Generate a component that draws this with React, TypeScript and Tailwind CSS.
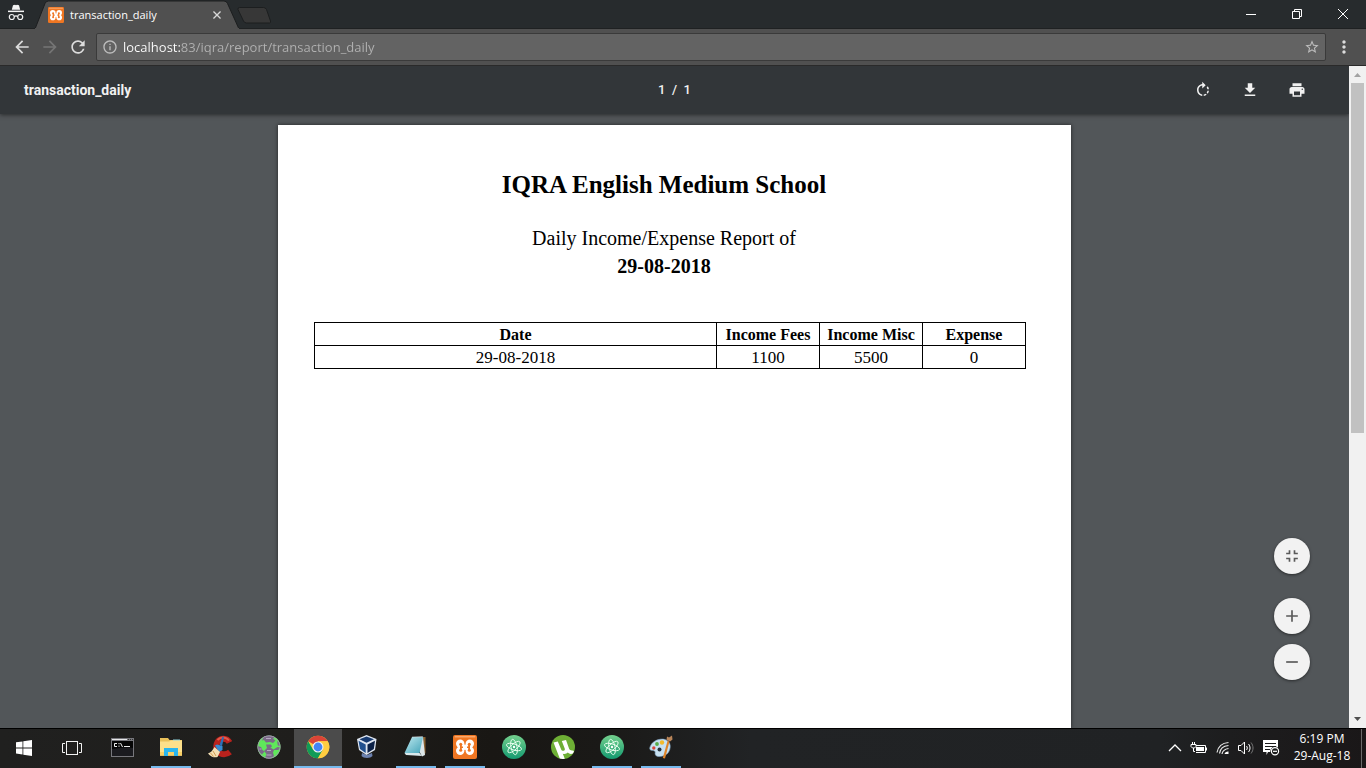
import type { ReactNode } from "react";
import {
  MdAdd,
  MdArrowBack,
  MdArrowForward,
  MdFileDownload,
  MdFullscreenExit,
  MdInfoOutline,
  MdMoreVert,
  MdPrint,
  MdRefresh,
  MdRemove,
  MdRotateRight,
  MdStarBorder,
} from "react-icons/md";

function IncognitoIcon() {
  return (
    <svg viewBox="0 0 18 18" className="size-[18px]" fill="#f4f4f4" aria-hidden="true">
      <path d="M6 1.2 8 .8l1 .4 1-.4 2 .4 1.2 4.6H4.8z" />
      <rect x="1" y="6.6" width="16" height="1.5" />
      <g fill="none" stroke="#f4f4f4" strokeWidth="1.2">
        <circle cx="4.8" cy="13" r="2.5" />
        <circle cx="13.2" cy="13" r="2.5" />
        <path d="M7.3 12.6c1-.8 2.4-.8 3.4 0" />
      </g>
    </svg>
  );
}

function XamppIcon({ className }: { className: string }) {
  return (
    <svg viewBox="0 0 24 24" className={className} aria-hidden="true">
      <rect width="24" height="24" rx="2" fill="#ef7622" />
      <rect x="1.5" y="1" width="21" height="1.5" rx=".7" fill="#f9a86b" />
      <g fill="#fff">
        <circle cx="7.200" cy="8.700" r="4.200" />
        <circle cx="16.800" cy="8.700" r="4.200" />
        <circle cx="7.200" cy="15.700" r="4.200" />
        <circle cx="16.800" cy="15.700" r="4.200" />
        <rect x="5" y="9.500" width="14" height="5.400" />
      </g>
      <g fill="#ef7622">
        <circle cx="7.700" cy="9.200" r="1.500" />
        <circle cx="16.300" cy="9.200" r="1.500" />
        <circle cx="7.700" cy="15.200" r="1.500" />
        <circle cx="16.300" cy="15.200" r="1.500" />
        <path d="M7 9.500h1.800v5.500H7zM15.200 9.500H17v5.500h-1.800zM8 11.400h2v1.600H8zM14 11.400h2v1.600h-2z" />
      </g>
    </svg>
  );
}

function WindowsIcon() {
  return (
    <svg viewBox="0 0 16 16" className="size-4" fill="#fff" aria-hidden="true">
      <path d="M0 2.3 6.5 1.4V7.5H0zM7.3 1.3 16 0v7.5H7.3zM0 8.400h6.5v6.1L0 13.6zM7.3 8.400H16V16l-8.700-1.3z" />
    </svg>
  );
}

function TaskViewIcon() {
  return (
    <svg viewBox="0 0 20 16" className="h-4 w-5" fill="none" stroke="#f2f2f2" aria-hidden="true">
      <rect x="4.5" y="1.5" width="11" height="13" />
      <path d="M3 3.5H.5v9H3M17 3.5h2.5v9H17" />
    </svg>
  );
}

function CommandPromptIcon() {
  return (
    <svg viewBox="0 0 23 19" className="h-[19px] w-[23px]" aria-hidden="true">
      <rect width="23" height="19" fill="#77777c" />
      <rect x="1" y="1" width="15" height="1" fill="#e6e6e8" />
      <path d="M17 1h1v1h-1zM19 1h1v1h-1zM21 1h1v1h-1z" fill="#333" />
      <rect x="1" y="3" width="21" height="15" fill="#050505" />
      <path d="M1 11c8-1 14-2 21-1v8H1z" fill="#1b1b1f" />
      <path d="M6 5.5H3.500v3H6M8 5v1.200M8 7.600v1.200M9.500 5l2 4M13 8.500h6" stroke="#eee" fill="none" />
    </svg>
  );
}

function ExplorerIcon() {
  return (
    <svg viewBox="0 0 22 18" className="h-[18px] w-[22px]" aria-hidden="true">
      <path d="M0 0h8l1.5 2H22v15.500H0z" fill="#eac15a" />
      <path d="M13 1.500h7v2h-7z" fill="#8fd3dc" />
      <path d="M0 3.500h9L11 2.500h11v15H0z" fill="#fde08a" />
      <path d="M0 14h22v3.500H0z" fill="#f7cf66" />
      <path d="M4 10h14v8h-4v-4H8v4H4z" fill="#29b5ee" />
    </svg>
  );
}

function CleanerIcon() {
  return (
    <svg viewBox="0 0 24 24" className="size-6" aria-hidden="true">
      <path
        d="M21.500 7.500C19 2.500 12.500 2.500 9.500 7c-2.500 4-1 9.500 3 11.500 3.500 1.500 7 .5 9.500-1.500"
        fill="none"
        stroke="#b8221d"
        strokeWidth="6"
      />
      <path
        d="M21 5.500C18 1.500 12.500 1.500 9.500 5"
        fill="none"
        stroke="#e2594a"
        strokeWidth="2"
      />
      <path d="M14.500 1.500 16 2.500l-2 8.500-2.500-1z" fill="#2b6fb8" />
      <path d="m7 10.500 2-1 5.500 1.500v4L11 17z" fill="#338bd4" />
      <path d="m6.500 12 5.500 5-2.500 5c-3 1-6.500 0-9.500-3.500 3-1 4.500-3 6.500-6.500z" fill="#f4dfb4" />
      <path d="m2.500 18 3 3.500M5 16l3 5" stroke="#d09b54" fill="none" />
    </svg>
  );
}

function GlobeIcon() {
  return (
    <svg viewBox="0 0 24 24" className="size-6" aria-hidden="true">
      <circle cx="12" cy="12" r="11.5" fill="#5fe85a" />
      <g fill="#7b6a88">
        <path d="M7 1.500C11-.2 15 .2 18 2l-2 1.500 2.500 2L16 8l-3-1-4 .5L7 5l-2 .5z" />
        <path d="M.6 11 4 12l1.500 3 2 1.500-2.500 3C2 17.500.6 14.500.6 11z" />
        <path d="M9 9.500h5l1 2-1.500 1 3 2 4-2.500 2.800.5-2 2.500H17l-1 2.500 1 3.500-4 3.500-5-1.500 1.500-4L7 16l3-3z" />
        <path d="M20 6l2.500 2 .8 3-2.500-.5z" />
      </g>
      <path d="M9 3.500h5M10 15.500h4M9.500 20h5M2.500 14h2" stroke="#b4a6c0" strokeWidth="1.200" />
      <circle cx="12" cy="12" r="11.2" fill="none" stroke="#a59ab0" strokeWidth=".8" />
    </svg>
  );
}

function ChromeIcon() {
  return (
    <svg viewBox="0 0 24 24" className="size-6" aria-hidden="true">
      <circle cx="12" cy="12" r="11.3" fill="#ffcd40" />
      <path d="M12 12 2.210 6.350A11.3 11.3 0 0 1 21.790 6.350H12z" fill="#db4437" />
      <path d="M2.210 6.350A11.3 11.3 0 0 0 12 23.300l4.900-8.500L12 12 7.100 14.830z" fill="#109b58" />
      <path d="M12 6.350h9.790A11.3 11.3 0 0 1 12 23.300l4.900-8.470z" fill="#ffcd40" />
      <circle cx="12" cy="12" r="5.500" fill="#f1f1f1" />
      <circle cx="12" cy="12" r="4.400" fill="#4285f4" />
    </svg>
  );
}

function VirtualBoxIcon() {
  return (
    <svg viewBox="0 0 24 24" className="size-6" aria-hidden="true">
      <path d="m7 18 5 2 5-2 .5 3c-2 2.500-9 2.500-11 0z" fill="#6c82b0" />
      <path d="M11.500 0 21.500 4 20 15l-8.500 5L4 15 2 4z" fill="#dfe6f1" />
      <path d="M11.500 1.500 19 4.300l-7.500 3.500L4.500 4.300z" fill="#173a70" />
      <path d="m3.500 5.700 7.200 3.700v8.600L5 14z" fill="#21508f" />
      <path d="M20 5.700 12.500 9.400V18l6.300-4z" fill="#0c2147" />
    </svg>
  );
}

function NotepadIcon() {
  return (
    <svg viewBox="0 0 24 24" className="size-6" aria-hidden="true">
      <defs>
        <linearGradient id="notepad" x1="0" y1="0" x2="1" y2="1">
          <stop offset="0" stopColor="#bfeaf0" />
          <stop offset="1" stopColor="#43a3b8" />
        </linearGradient>
      </defs>
      <path d="M19 2h2.500v16l-1.500 2z" fill="#8a612f" />
      <path d="m8 2 11-.5 2 18.500-3 1.500z" fill="#dbe6e9" />
      <path d="M8 2h11l-3.500 16H.5z" fill="url(#notepad)" />
      <path d="M.5 18h15l2.500 3L2 20z" fill="#d9e8eb" />
      <path d="M8.500 2h10" stroke="#d9d9d9" strokeDasharray="1 1" />
    </svg>
  );
}

function AtomIcon() {
  return (
    <svg viewBox="0 0 24 24" className="size-6" aria-hidden="true">
      <defs>
        <linearGradient id="atom" x1="0" y1="0" x2="0" y2="1">
          <stop offset="0" stopColor="#74d08d" />
          <stop offset="1" stopColor="#149a70" />
        </linearGradient>
      </defs>
      <circle cx="12" cy="12" r="12" fill="url(#atom)" />
      <g fill="none" stroke="#eafff0" strokeWidth=".9">
        <ellipse cx="12" cy="12" rx="3" ry="7.8" transform="rotate(-12 12 12)" />
        <ellipse cx="12" cy="12" rx="3" ry="7.8" transform="rotate(48 12 12)" />
        <ellipse cx="12" cy="12" rx="3" ry="7.8" transform="rotate(108 12 12)" />
      </g>
      <circle cx="12" cy="12" r="1.2" fill="#fff" />
    </svg>
  );
}

function TorrentIcon() {
  return (
    <svg viewBox="0 0 24 24" className="size-6" aria-hidden="true">
      <circle cx="12" cy="12" r="12" fill="#6eaf35" />
      <path
        d="m2.500 7.500 4.300-1 3.500 8.300c.8 1.800 4 1.200 3.500-1L10.800 6l4.200-.9 3.200 9c.4 1 1.500 1.500 3 1.400l1.800.5-1 2.400c-1.800.9-4 .5-5.200-.8-1.200 1.300-3 1.800-5 1.200l2 4.900c-1.500.4-3.500.4-5-.2z"
        fill="#fff"
      />
    </svg>
  );
}

function PaintIcon() {
  return (
    <svg viewBox="0 0 24 24" className="size-6" aria-hidden="true">
      <path
        d="M1.500 11C3.500 6 10.500 3 16 4.500 22.500 6.500 22.500 14 18.500 18.500 14.500 22 8 22.500 6.500 20c-1-2 .5-3-1-4-1.500-1-3.500 0-4.500-1.500-.5-1-.2-2.300.5-3.500z"
        fill="#c7e1f2"
        stroke="#7fa5c4"
        strokeWidth=".6"
      />
      <circle cx="4.800" cy="13" r="1.700" fill="#d8453c" />
      <circle cx="8" cy="9" r="1.900" fill="#58ad4b" />
      <circle cx="13" cy="7.500" r="2.200" fill="#f3ba2b" />
      <circle cx="10.500" cy="14.500" r="2" fill="#25303a" />
      <path d="m18.500 6 2 .6-4.500 17-2.200-.5z" fill="#df8429" />
      <path d="M17.500 5 18 1.500l2 1L23 .5l.5 4-2.500 2z" fill="#b98559" />
    </svg>
  );
}

function BatteryIcon() {
  return (
    <svg viewBox="0 0 18 14" className="h-3.5 w-[18px]" fill="none" stroke="#fff" aria-hidden="true">
      <path d="M6 4.500h9.500v7h-9.500M16.500 6.500v3" />
      <rect x="6" y="6" width="8" height="4" fill="#fff" stroke="none" />
      <path d="M2.500 1v2M4.500 1v2M1 3.500h5v2l-1.500 1.500h-2L1 5.500zM3.500 7v3.500H5" />
    </svg>
  );
}

function WifiIcon() {
  return (
    <svg viewBox="0 0 14 14" className="size-3.5" fill="none" stroke="#e8e8e8" aria-hidden="true">
      <path
        d="M1 11.500C2 6 6 2 12.500 1.500M3.500 12.500C4 8 7.500 5 12.500 4.500M6 13c.5-3 3-5 6.500-5.500"
        strokeWidth="1.200"
      />
      <path d="M8.500 13c.3-1.500 2-2.700 4-2.500V13z" fill="#fff" stroke="none" />
    </svg>
  );
}

function VolumeIcon() {
  return (
    <svg viewBox="0 0 17 14" className="h-3.5 w-[17px]" fill="none" stroke="#fff" aria-hidden="true">
      <path d="M.5 4.500H3L6.500 1v12L3 9.500H.5z" />
      <path d="M8.500 5c1 1.200 1 2.800 0 4M10.500 3c2 2.500 2 5.500 0 8" />
      <path d="M13 1.500c2.700 3.500 2.700 7.500 0 11" stroke="#777" />
    </svg>
  );
}

function ActionCenterIcon() {
  return (
    <svg viewBox="0 0 17 16" className="h-4 w-[17px]" aria-hidden="true">
      <path d="M0 0h15v12H5l-1.500 3V12H0z" fill="#fff" />
      <path d="M2 3.500h11M2 6.500h11M2 9.500h5" stroke="#1b1b1b" />
      <circle cx="12" cy="11.300" r="4.700" fill="#1b1b1b" />
      <circle cx="12" cy="11.300" r="3.600" fill="#1b1b1b" stroke="#fff" strokeWidth="1.200" />
      <path d="M10 11.300h4" stroke="#fff" strokeWidth="1.200" />
    </svg>
  );
}

function TitleBar() {
  return (
    <header className="flex h-[29px] shrink-0 border-b border-[#1f2122] bg-[#272b2d]">
      <div className="flex w-[35px] justify-center pt-1 pr-1">
        <IncognitoIcon />
      </div>
      <div className="relative flex h-7 w-[204px] items-center pt-px pr-3 pl-[13px]">
        <svg
          viewBox="0 0 204 29"
          preserveAspectRatio="none"
          className="absolute inset-x-0 top-0 h-[29px] w-full"
          aria-hidden="true"
        >
          <path d="M0 29 10 3.500Q11 1 13.500 1H189q2.500 0 3.500 2.500L204 29z" fill="#505050" stroke="#1c1e1f" />
          <path d="M0 28.500h204" stroke="#505050" />
        </svg>
        <div className="relative flex flex-1 items-center">
          <XamppIcon className="size-4" />
          <span className="ml-1.5 flex-1 text-[11px] leading-4 text-white">transaction_daily</span>
          <button type="button" aria-label="Close tab" className="mr-1 flex size-3 items-center justify-center">
            <svg viewBox="0 0 9 9" className="size-2" stroke="#d8d8d8" strokeWidth="1.500" aria-hidden="true">
              <path d="m.5.5 8 8M8.500.5l-8 8" />
            </svg>
          </button>
        </div>
      </div>
      <button type="button" aria-label="New tab" className="mt-[7px] -ml-0.5 h-[17px]">
        <svg viewBox="0 0 35 17" className="h-[17px] w-[35px]" aria-hidden="true">
          <path
            d="M2.500.5h24q2 0 3 2l4 11.500q.5 2-1 2H9.500q-2 0-3-2L1 2.500Q.5.5 2.500.5z"
            fill="#373737"
            stroke="#1c1e1f"
          />
        </svg>
      </button>
      <div className="ml-auto flex h-[27px]">
        <button type="button" aria-label="Minimize" className="flex w-[46px] items-center justify-center">
          <svg viewBox="0 0 10 10" className="size-2.5" stroke="#fff" aria-hidden="true">
            <path d="M0 5.500h10" />
          </svg>
        </button>
        <button type="button" aria-label="Restore" className="flex w-[46px] items-center justify-center">
          <svg viewBox="0 0 10 10" className="size-2.5" fill="none" stroke="#fff" aria-hidden="true">
            <path d="M.5 2.500h7v7h-7zM2.500 2.500v-2h7v7h-2" />
          </svg>
        </button>
        <button type="button" aria-label="Close" className="flex w-[46px] items-center justify-center">
          <svg viewBox="0 0 10 10" className="size-2.5" stroke="#fff" aria-hidden="true">
            <path d="m0 0 10 10M10 0 0 10" />
          </svg>
        </button>
      </div>
    </header>
  );
}

function AddressBar() {
  return (
    <nav className="flex h-[37px] shrink-0 items-center border-b border-[#2a2a2a] bg-[#505050] pl-3">
      <button type="button" aria-label="Back">
        <MdArrowBack className="size-5 text-[#dcdcdc]" />
      </button>
      <button type="button" aria-label="Forward" className="ml-2">
        <MdArrowForward className="size-5 text-[#757575]" />
      </button>
      <button type="button" aria-label="Reload" className="ml-2">
        <MdRefresh className="size-5 text-[#dcdcdc]" />
      </button>
      <div className="ml-2 flex h-7 flex-1 items-center rounded-xs border border-[#3a3a3a] bg-[#636363] px-[5px]">
        <MdInfoOutline className="size-4 text-[#bdbdbd]" />
        <input
          type="text"
          aria-label="Address"
          defaultValue="localhost:83/iqra/report/transaction_daily"
          className="ml-[5px] h-6 min-w-0 flex-1 bg-[linear-gradient(90deg,#fff_57px,#b1b1b1_57px)] bg-clip-text text-[13px] text-transparent outline-none"
        />
        <button type="button" aria-label="Bookmark this page">
          <MdStarBorder className="size-4 text-[#bdbdbd]" />
        </button>
      </div>
      <button type="button" aria-label="Menu" className="mr-3 ml-2">
        <MdMoreVert className="size-5 text-[#dcdcdc]" />
      </button>
    </nav>
  );
}

function ViewerToolbar() {
  return (
    <div className="relative z-10 grid h-12 shrink-0 grid-cols-3 items-center bg-[#323639] px-6 font-['Roboto',sans-serif] text-[#f1f1f1] shadow-[0_1px_4px_rgba(0,0,0,0.5)]">
      <h1 className="text-[14px] font-bold">transaction_daily</h1>
      <p className="text-center text-[13px] font-medium whitespace-pre">1  /  1</p>
      <div className="flex justify-end gap-[29px] pr-[19px]">
        <button type="button" aria-label="Rotate clockwise">
          <MdRotateRight className="size-[18px]" />
        </button>
        <button type="button" aria-label="Download">
          <MdFileDownload className="size-[18px]" />
        </button>
        <button type="button" aria-label="Print">
          <MdPrint className="size-[18px]" />
        </button>
      </div>
    </div>
  );
}

const rows = [{ date: "29-08-2018", fees: 1100, misc: 5500, expense: 0 }];

function ReportPage() {
  return (
    <article className="w-[793px] bg-white pt-[45px] pl-9 font-['Liberation_Serif',serif] text-black shadow-[0_0_4px_rgba(0,0,0,0.6)]">
      <div className="w-[700px] text-center">
        <h2 className="text-[25px] leading-[30px] font-bold">IQRA English Medium School</h2>
        <p className="mt-6 text-[20px] leading-7">
          Daily Income/Expense Report of
          <br />
          <strong>29-08-2018</strong>
        </p>
      </div>
      <table className="mt-[42px] w-[712px] table-fixed border-collapse text-center [&_td]:border [&_td]:border-black [&_td]:pt-0.5 [&_th]:border [&_th]:border-black [&_th]:pt-0.5">
        <thead>
          <tr className="h-[23px] text-[16px] leading-5">
            <th>Date</th>
            <th className="w-[103px]">Income Fees</th>
            <th className="w-[103px]">Income Misc</th>
            <th className="w-[103px]">Expense</th>
          </tr>
        </thead>
        <tbody>
          {rows.map((row) => (
            <tr key={row.date} className="h-[23px] text-[17px] leading-5">
              <td>{row.date}</td>
              <td>{row.fees}</td>
              <td>{row.misc}</td>
              <td>{row.expense}</td>
            </tr>
          ))}
        </tbody>
      </table>
    </article>
  );
}

const zoomButton =
  "flex size-9 items-center justify-center rounded-full bg-[#f2f2f2] text-[#5a5a5a] shadow-[0_1px_3px_rgba(0,0,0,0.5)]";

function Viewer() {
  return (
    <main className="flex min-h-0 flex-1 bg-[#525659]">
      <section className="relative flex min-w-0 flex-1 flex-col overflow-hidden">
        <ViewerToolbar />
        <div className="flex flex-1 justify-center pt-[11px]">
          <ReportPage />
        </div>
        <div className="absolute right-[39px] bottom-12 flex flex-col">
          <button type="button" aria-label="Fit to page" className={zoomButton}>
            <MdFullscreenExit className="size-5" />
          </button>
          <button type="button" aria-label="Zoom in" className={`mt-6 ${zoomButton}`}>
            <MdAdd className="size-5" />
          </button>
          <button type="button" aria-label="Zoom out" className={`mt-2.5 ${zoomButton}`}>
            <MdRemove className="size-5" />
          </button>
        </div>
      </section>
      <div className="flex w-[17px] shrink-0 flex-col items-center bg-[#f1f1f1]">
        <svg viewBox="0 0 17 17" className="size-[17px]" fill="#a3a3a3" aria-hidden="true">
          <path d="M5 11h7L8.500 7z" />
        </svg>
        <div className="h-[350px] w-[13px] bg-[#c1c1c1]" />
        <svg viewBox="0 0 17 17" className="mt-auto size-[17px]" fill="#505050" aria-hidden="true">
          <path d="M5 6h7l-3.500 4z" />
        </svg>
      </div>
    </main>
  );
}

type TaskbarApp = { name: string; icon: ReactNode; state?: "open" | "active" };

const apps: TaskbarApp[] = [
  { name: "Command Prompt", icon: <CommandPromptIcon /> },
  { name: "File Explorer", icon: <ExplorerIcon />, state: "open" },
  { name: "CCleaner", icon: <CleanerIcon /> },
  { name: "Globe", icon: <GlobeIcon /> },
  { name: "Google Chrome", icon: <ChromeIcon />, state: "active" },
  { name: "VirtualBox", icon: <VirtualBoxIcon /> },
  { name: "Notepad", icon: <NotepadIcon />, state: "open" },
  { name: "XAMPP", icon: <XamppIcon className="size-6" />, state: "open" },
  { name: "Atom", icon: <AtomIcon /> },
  { name: "uTorrent", icon: <TorrentIcon /> },
  { name: "Atom window", icon: <AtomIcon />, state: "open" },
  { name: "Paint", icon: <PaintIcon />, state: "open" },
];

function appFrame(state: TaskbarApp["state"]) {
  if (state === "active") return "w-12 border-b-2 border-[#76b9ed] bg-[#4b4b4b]";
  if (state === "open") return "mx-1 w-10 border-b-2 border-[#76b9ed]";
  return "w-12 border-b-2 border-transparent";
}

function Taskbar() {
  return (
    <footer className="flex h-10 shrink-0 border-t border-black bg-[linear-gradient(90deg,#20201f_0%,#1f1e1c_22%,#191714_36%,#1a1917_44%,#212325_55%,#202224_85%,#1d1d1e_90%,#1a1718_100%)]">
      <button type="button" aria-label="Start" className="flex w-12 items-center justify-center pb-0.5">
        <WindowsIcon />
      </button>
      <button type="button" aria-label="Task view" className="flex w-12 items-center justify-center pb-0.5">
        <TaskViewIcon />
      </button>
      <div className="ml-0.5 flex gap-px">
        {apps.map((app) => (
          <button
            key={app.name}
            type="button"
            aria-label={app.name}
            className={`flex items-center justify-center pb-px ${appFrame(app.state)}`}
          >
            {app.icon}
          </button>
        ))}
      </div>
      <div className="ml-auto flex items-center">
        <div className="flex items-center gap-2 pb-px">
          <button type="button" aria-label="Show hidden icons">
            <svg viewBox="0 0 14 8" className="h-2 w-3.5" fill="none" stroke="#fff" strokeWidth="1.300" aria-hidden="true">
              <path d="m1 7 6-6 6 6" />
            </svg>
          </button>
          <BatteryIcon />
          <WifiIcon />
          <VolumeIcon />
          <ActionCenterIcon />
        </div>
        <div className="ml-[11px] w-[62px] pb-1 text-center text-[12px] leading-[17px] text-white">
          <div>6:19 PM</div>
          <div>29-Aug-18</div>
        </div>
        <button type="button" aria-label="Show desktop" className="ml-2 h-full w-[5px] border-l border-[#6a6a6a]" />
      </div>
    </footer>
  );
}

export default function App() {
  return (
    <div className="flex h-screen flex-col overflow-hidden font-['Open_Sans','Noto_Sans',sans-serif]">
      <TitleBar />
      <AddressBar />
      <Viewer />
      <Taskbar />
    </div>
  );
}
